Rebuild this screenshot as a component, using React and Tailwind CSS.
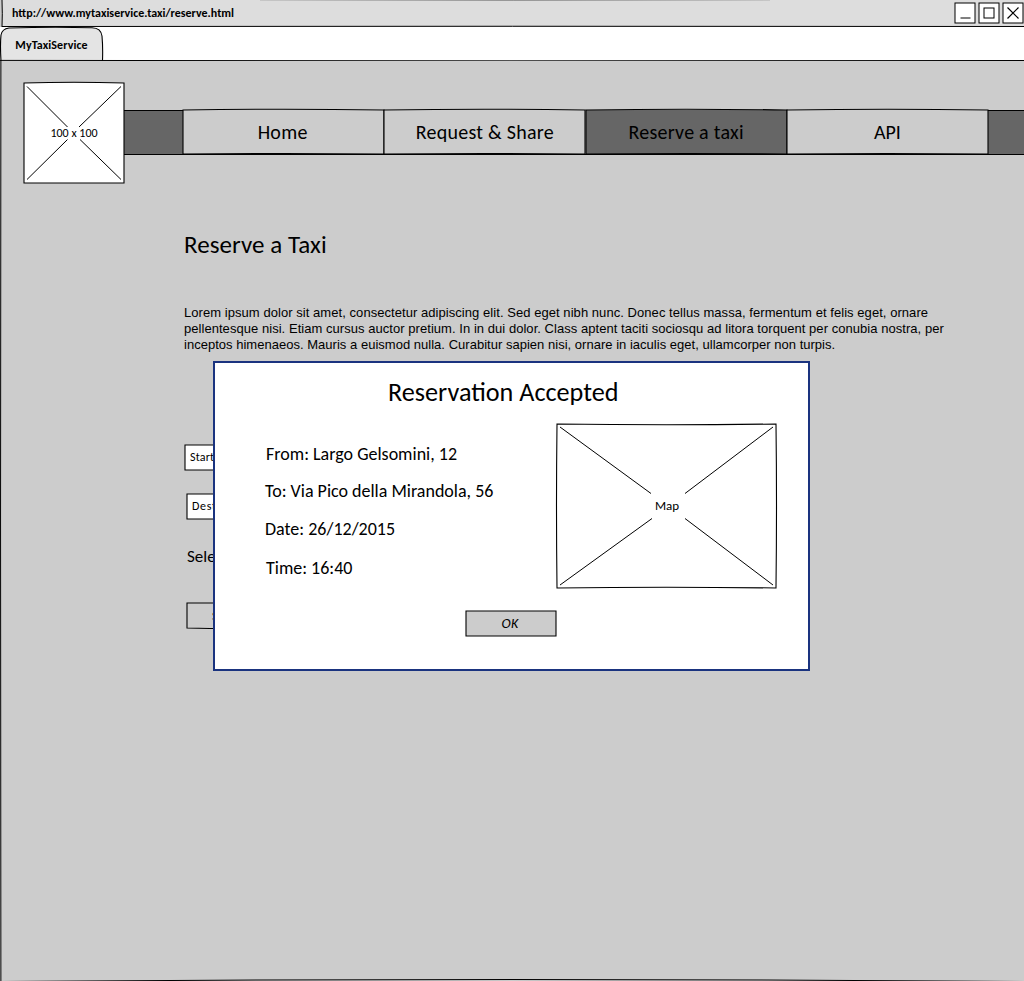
import React from "react";

const UI = "font-['Carlito','Lato',sans-serif] text-black whitespace-nowrap leading-none";

// Hand-drawn outline: four strokes, each bowed by the given amount at its middle.
function Outline({ w, h, top = 0, right = 0, bottom = 0, left = 0, children }) {
  return (
    <svg className="absolute inset-0 overflow-visible" width={w} height={h} fill="none" stroke="#000" strokeWidth="1.1">
      <path d={`M0 0Q${w / 2} ${top} ${w} 0Q${w + right} ${h / 2} ${w} ${h}Q${w / 2} ${h + bottom} 0 ${h}Q${left} ${h / 2} 0 0Z`} />
      {children}
    </svg>
  );
}

function NavItem({ label, active, cls }) {
  return (
    <a className={`relative flex h-11 w-[201.25px] items-center justify-center ${active ? "bg-[#666]" : "bg-[#ccc]"}`}>
      <Outline w={201} h={44} top={-1.5} bottom={-1} />
      <span className={`${UI} relative text-[20px] ${cls}`}>{label}</span>
    </a>
  );
}

function WindowButton({ children }) {
  return (
    <button className="relative block h-5 w-5 bg-white">
      <svg width="20" height="20" className="block overflow-visible" fill="none" stroke="#000" strokeWidth="1">
        <rect x="0" y="0" width="20" height="20" />
        {children}
      </svg>
    </button>
  );
}

export default function App() {
  return (
    <div className="relative h-[981px] w-[1024px] overflow-hidden bg-[#ccc]">
      <header className="relative flex h-[27px] items-start justify-between bg-[#ddd] pl-3">
        <span className={`${UI} pt-[7px] text-[12px] font-bold`}>http://www.mytaxiservice.taxi/reserve.html</span>
        <div className="flex gap-1 pt-[3px] pr-px">
          <WindowButton><path d="M5.500 15H15.500" /></WindowButton>
          <WindowButton><rect x="5" y="5" width="10" height="10" /></WindowButton>
          <WindowButton><path d="M4.500 4.500L15.500 15.500M15.500 4.500L4.500 15.500" strokeWidth="1.200" /></WindowButton>
        </div>
        <svg className="absolute inset-0" width="1024" height="27" fill="none" stroke="#000">
          <path d="M0 0H2V27H0Z" fill="#ccc" stroke="none" />
          <path d="M2 0Q2.600 14 2 27M2 26.500Q512 26 1024 26.500" />
          <path d="M260 -.300Q512 .600 770 -.300" strokeOpacity=".5" />
        </svg>
      </header>

      <nav className="relative flex h-[34px] bg-white">
        <div className="relative flex h-[34px] w-[103px] items-start justify-center pt-[12px]">
          <svg className="absolute inset-0 overflow-visible" width="103" height="34" stroke="#000" fill="#e4e4e4">
            <path d="M1 34Q0 18 1 8Q2 2 9 1Q50 -.300 92 .700Q101 1 102 9Q103 20 102.500 34" strokeWidth="1.100" />
          </svg>
          <span className={`${UI} relative text-[12px] font-bold tracking-[0.080px]`}>MyTaxiService</span>
        </div>
        <svg className="absolute inset-0" width="1024" height="34" stroke="#000" fill="none">
          <path d="M0 33.400Q512 34.200 1024 33.500" />
        </svg>
      </nav>

      <div className="flex items-start">
        <div className="relative z-10 mt-[22px] ml-6 flex h-[100px] w-[100px] items-center justify-center bg-white">
          <Outline w={100} h={100} top={-1.500}>
            <path strokeWidth="1" d="M3 3.500L43.500 44M97 3.500L55 44M3 96.500L43.500 56.500M97 96.500L56 56.500" />
          </Outline>
          <span className={`${UI} relative text-[12px]`}>100 x 100</span>
        </div>
        <div className="mt-[49px] flex h-[45px] flex-1 border-y border-black bg-[#666] pl-[59px]">
          <div className="-mt-px flex">
            <NavItem label="Home" cls="right-px tracking-[0.250px]" />
            <NavItem label="Request & Share" cls="tracking-[0.250px]" />
            <NavItem label="Reserve a taxi" active cls="tracking-[0.250px]" />
            <NavItem label="API" cls="tracking-[0px]" />
          </div>
        </div>
      </div>

      <main className="ml-[184px] flex flex-col items-start">
        <h1 className={`${UI} mt-[49px] h-[25px] text-[25px] tracking-[0.050px]`}>Reserve a Taxi</h1>
        <p className="mt-[48px] flex flex-col font-['Liberation_Sans',sans-serif] text-[13px] leading-4 whitespace-nowrap text-black">
          <span className="tracking-[0.055px]">Lorem ipsum dolor sit amet, consectetur adipiscing elit. Sed eget nibh nunc. Donec tellus massa, fermentum et felis eget, ornare</span>
          <span className="tracking-[0.045px]">pellentesque nisi. Etiam cursus auctor pretium. In in dui dolor. Class aptent taciti sociosqu ad litora torquent per conubia nostra, per</span>
          <span className="tracking-[0.02px]">inceptos himenaeos. Mauris a euismod nulla. Curabitur sapien nisi, ornare in iaculis eget, ullamcorper non turpis.</span>
        </p>
        <div className="relative mt-[92px] ml-px flex h-[25px] w-40 items-center bg-white pb-px pl-[5px]">
          <Outline w={160} h={25} />
          <span className={`${UI} relative text-[12px] tracking-[0.200px]`}>Start</span>
        </div>
        <div className="relative mt-6 ml-[3px] flex h-[25px] w-40 items-center bg-white pb-px pl-[5px]">
          <Outline w={160} h={25} />
          <span className={`${UI} relative text-[12px] tracking-[0.700px]`}>Dest</span>
        </div>
        <span className={`${UI} mt-[29px] ml-[3px] h-4 text-[17px]`}>Sele</span>
        <div className="relative mt-[39px] ml-[3px] flex h-[25px] w-[91px] items-center pl-[25px]">
          <Outline w={91} h={25} bottom={1} />
          <span className={`${UI} relative text-[13px]`}>S</span>
        </div>
      </main>

      <section className="absolute top-[361px] left-[213px] flex h-[310px] w-[597px] flex-col items-start border-2 border-[#1a337f] bg-white">
        <h2 className={`${UI} mt-[16px] ml-[173px] h-[26px] text-[26.200px]`}>Reservation Accepted</h2>
        <div className="mt-[19px] flex w-full justify-between pr-8 pl-[50px]">
          <div className="flex flex-col items-start pt-[21px]">
            <span className={`${UI} pl-px text-[18px]`}>From: Largo Gelsomini, 12</span>
            <span className={`${UI} mt-[19px] text-[18px]`}>To: Via Pico della Mirandola, 56</span>
            <span className={`${UI} mt-5 text-[18px]`}>Date: 26/12/2015</span>
            <span className={`${UI} mt-[21px] pl-px text-[18px]`}>Time: 16:40</span>
          </div>
          <div className="relative flex h-[164px] w-[219px] items-center justify-center bg-white pb-0.5 pl-px">
            <Outline w={219} h={164} top={1.500} right={1} bottom={-1.500} left={-1}>
              <path strokeWidth="1" d="M3 3L94 69.500M216 3L128 69.500M3 161L95 94.500M216 161L128 94.500" />
            </Outline>
            <span className={`${UI} relative text-[13px]`}>Map</span>
          </div>
        </div>
        <button className="relative mt-[23px] ml-[251px] flex h-[25px] w-[90px] items-center justify-center bg-[#ccc] pr-0.5">
          <Outline w={90} h={25} />
          <span className={`${UI} relative text-[14px] tracking-[0.300px] italic`}>OK</span>
        </button>
      </section>

      <svg className="pointer-events-none absolute inset-0" width="1024" height="981" fill="none" stroke="#000">
        <path d="M.900 61Q.200 521 .900 981M0 981.500Q512 977.500 1024 981.500" />
      </svg>
    </div>
  );
}
